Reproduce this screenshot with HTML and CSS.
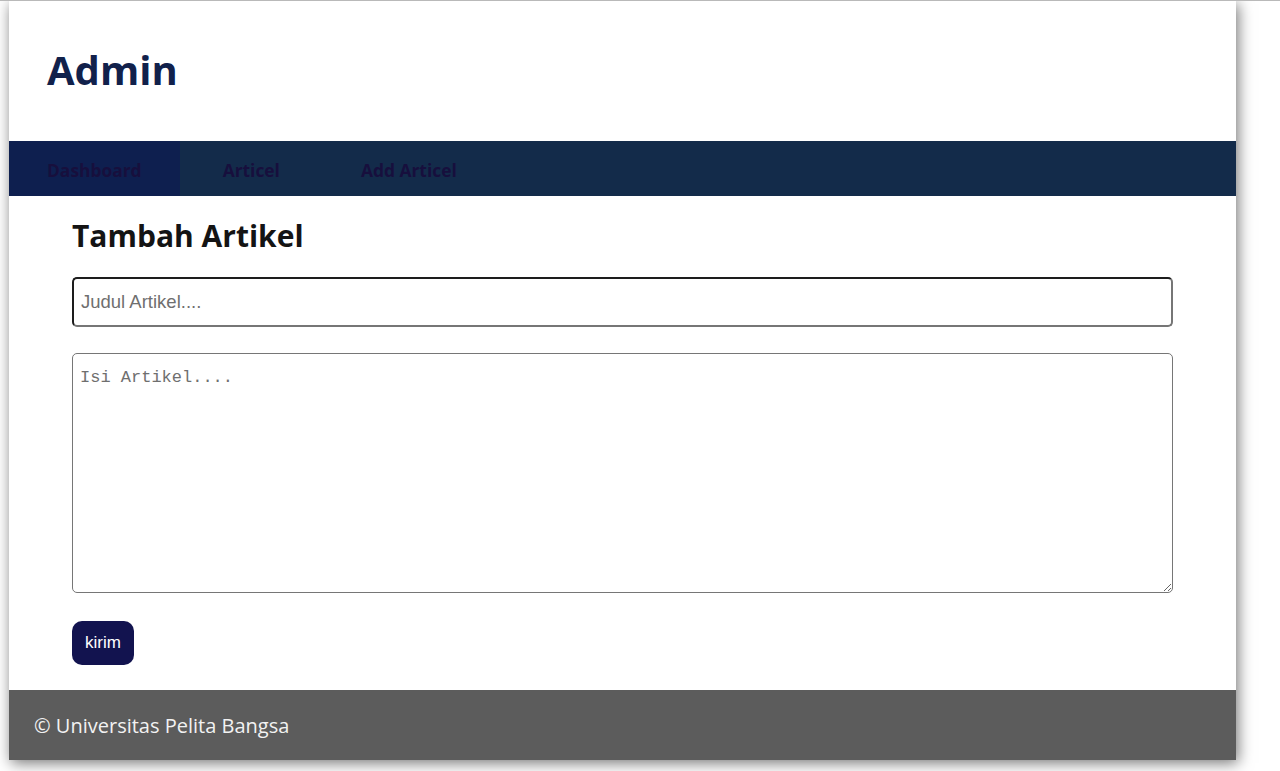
FILE: index.html
```html
<!DOCTYPE html>
<html lang="id">
<head>
<meta charset="utf-8">
<title>Admin</title>
<link rel="stylesheet" href="styles.css">
</head>
<body>
<div class="page">
  <div class="container">
    <header class="header">
      <h1 class="brand">Admin</h1>
    </header>
    <nav class="nav">
      <a class="nav-item active" href="#">Dashboard</a>
      <a class="nav-item" href="#">Articel</a>
      <a class="nav-item" href="#">Add Articel</a>
    </nav>
    <main class="content">
      <h2 class="title">Tambah Artikel</h2>
      <form class="form">
        <input class="field-input" type="text" placeholder="Judul Artikel....">
        <textarea class="field-text" placeholder="Isi Artikel...."></textarea>
        <div><button class="btn" type="button">kirim</button></div>
      </form>
    </main>
    <footer class="footer">© Universitas Pelita Bangsa</footer>
  </div>
</div>
</body>
</html>
```

FILE: styles.css
```css
html, body {
  margin: 0;
  padding: 0;
  background: #ffffff;
}
body {
  border-top: 1px solid #b9b9b9;
  font-family: "Open Sans", "Liberation Sans", sans-serif;
}
.page {
  padding-left: 9px;
  padding-bottom: 11px;
}
.container {
  width: 1227px;
  background: #ffffff;
  box-shadow: 2px 3px 14px rgba(0, 0, 0, 0.55);
}
.header {
  height: 140px;
  display: flex;
  align-items: center;
  padding: 0 38px;
  box-sizing: border-box;
}
.brand {
  margin: 0;
  font-size: 40px;
  font-weight: 700;
  color: #11214b;
  line-height: 1;
  padding-bottom: 2px;
}
.nav {
  display: flex;
  height: 55px;
  background: #132b4a;
}
.nav-item {
  display: flex;
  align-items: center;
  padding: 2px 38px 0;
  font-size: 17.4px;
  font-weight: 700;
  color: #170f3d;
  text-decoration: none;
}
.nav-item + .nav-item {
  padding-left: 43px;
}
.nav-item.active {
  background: #0e1f4f;
}
.content {
  padding: 20px 63px 25px;
}
.title {
  margin: 0 0 21px;
  font-size: 30px;
  font-weight: 700;
  color: #141414;
  line-height: 40px;
}
.form {
  display: flex;
  flex-direction: column;
}
.field-input {
  height: 50px;
  box-sizing: border-box;
  border: 2px solid #767676;
  border-top-color: #1d1d1d;
  border-left-color: #1d1d1d;
  border-radius: 5px;
  padding: 0 7px;
  font-family: "Liberation Sans", Arial, sans-serif;
  font-size: 18.5px;
  color: #222;
  outline: none;
  margin-bottom: 26px;
}
.field-input::placeholder {
  color: #6f6f6f;
}
.field-text {
  height: 240px;
  box-sizing: border-box;
  border: 1px solid #767676;
  border-radius: 5px;
  padding: 14px 7px;
  font-family: "Liberation Mono", "DejaVu Sans Mono", monospace;
  font-size: 17px;
  color: #222;
  resize: vertical;
  margin-bottom: 28px;
}
.field-text::placeholder {
  color: #6f6f6f;
}
.btn {
  background: #12134f;
  color: #ffffff;
  border: none;
  border-radius: 10px;
  height: 44px;
  padding: 0 13px;
  font-family: "Liberation Sans", Arial, sans-serif;
  font-size: 17px;
  cursor: pointer;
}
.footer {
  height: 70px;
  background: #5c5c5c;
  color: #f2f2f2;
  display: flex;
  align-items: center;
  padding: 0 25px;
  font-size: 20px;
}
```
